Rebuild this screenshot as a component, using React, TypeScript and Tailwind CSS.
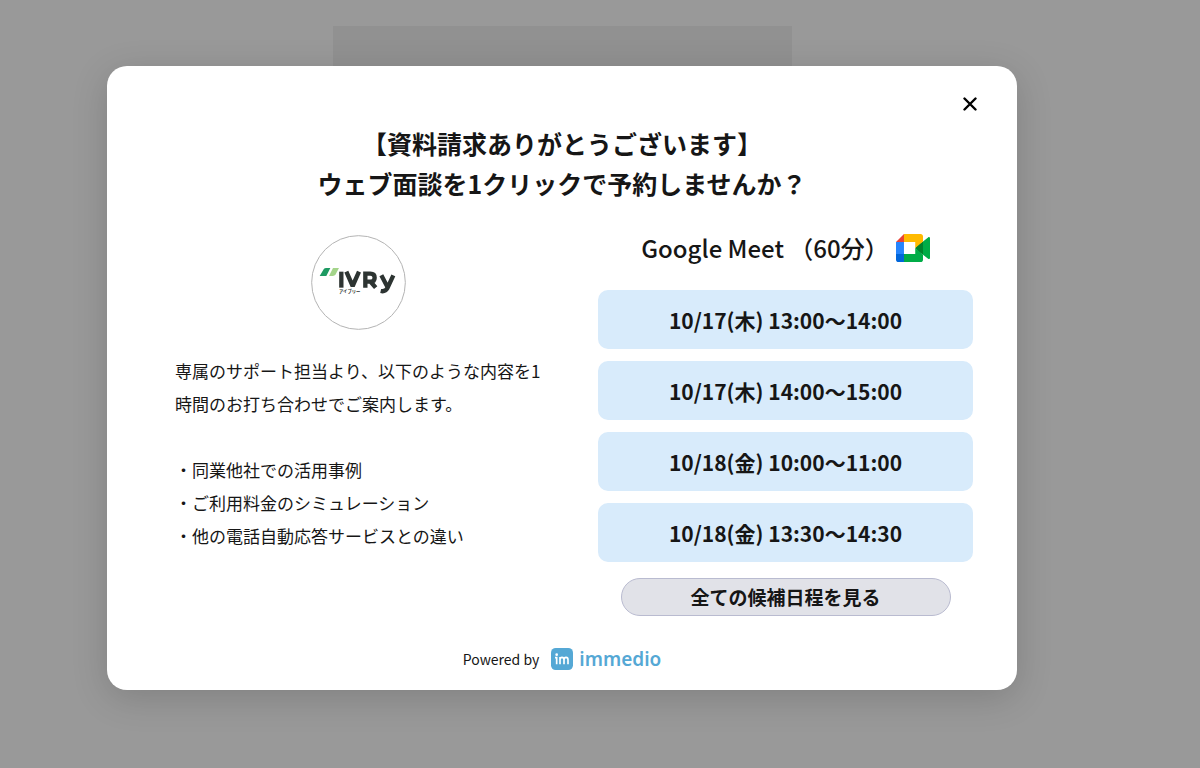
const SLOTS = [
  '10/17(木) 13:00〜14:00',
  '10/17(木) 14:00〜15:00',
  '10/18(金) 10:00〜11:00',
  '10/18(金) 13:30〜14:30',
];

const TOPICS = [
  '・同業他社での活用事例',
  '・ご利用料金のシミュレーション',
  '・他の電話自動応答サービスとの違い',
];

function CompanyLogo() {
  return (
    <svg viewBox="0 0 285 285" className="size-[95px]" role="img" aria-label="IVRy">
      <circle cx="142.5" cy="142.5" r="140.5" fill="#fff" stroke="#b4b4b4" strokeWidth="3" />
      <path d="M46 99 H58 L46 123 H26 L38 103 Q40 99 46 99 Z" fill="#1d9a62" />
      <path d="M66 99 H84 L74 118 Q71 123 65 123 H54 Z" fill="#a4d48a" />
      <g fill="none" stroke="#2d3432" strokeWidth="13">
        <path d="M91 110 V158" />
        <path d="M106 110 L125 153 L144 110" strokeLinejoin="bevel" />
        <path d="M163 158 V116 H178 Q191 116 191 128 Q191 140 178 140 H163 M177 138 L194 158" />
        <path d="M211 121 L229 155 M247 121 L229 160 Q223 171 209 168" />
      </g>
      <text x="84" y="175" fontSize="13" fontWeight="700" fill="#2d3432" fontFamily="Noto Sans CJK JP, sans-serif">
        アイブリー
      </text>
    </svg>
  );
}

function MeetIcon() {
  return (
    <svg viewBox="0 0 87.5 72" className="h-7 w-[34px]" aria-hidden="true">
      <path fill="#00832d" d="M49.5 36l8.53 9.75 11.47 7.33 2-17.02-2-16.64-11.69 6.44z" />
      <path fill="#0066da" d="M0 51.5V66c0 3.315 2.685 6 6 6h14.5l3-10.96-3-9.54-9.95-3z" />
      <path fill="#e94235" d="M20.5 0L0 20.5l10.55 3 9.95-3 2.95-9.41z" />
      <path fill="#2684fc" d="M20.5 20.5H0v31h20.5z" />
      <path
        fill="#00ac47"
        d="M82.6 8.68L69.5 19.42v33.66l13.16 10.79c1.97 1.54 4.85.135 4.85-2.37V11c0-2.535-2.945-3.925-4.91-2.32zM49.5 36v15.5h-29V72h43c3.315 0 6-2.685 6-6V53.08z"
      />
      <path fill="#ffba00" d="M63.5 0h-43v20.5h29V36l20-16.57V6c0-3.315-2.685-6-6-6z" />
    </svg>
  );
}

function ImmedioMark() {
  return (
    <svg viewBox="0 0 66 66" className="size-[22px]" aria-hidden="true">
      <rect width="66" height="66" rx="14" fill="#55a8d5" />
      <circle cx="17" cy="20" r="4" fill="#fff" />
      <path
        d="M12 29 H17 V49 M27 49 V27 M27 35 Q27 28 33 28 Q39 28 39 35 V49 M39 35 Q39 28 45 28 Q51 28 51 35 V49"
        fill="none"
        stroke="#fff"
        strokeWidth="5"
      />
    </svg>
  );
}

export default function App() {
  return (
    <div className="relative isolate flex min-h-screen items-start justify-center bg-[#999999] pt-[66px] pr-[76px] pb-10 font-['Noto_Sans_CJK_JP',sans-serif] text-[#161616]">
      <div className="absolute inset-x-0 top-[26px] -z-10 flex justify-center pr-[76px]">
        <div className="h-20 w-[459px] bg-[#919191]" />
      </div>

      <main
        role="dialog"
        aria-labelledby="dialog-title"
        className="w-full max-w-[910px] rounded-[20px] bg-white pt-[27px] pr-11 pb-4 pl-[68px] shadow-[0_8px_36px_rgba(0,0,0,0.16)]"
      >
        <div className="-mr-2 flex justify-end">
          <button type="button" aria-label="閉じる" className="flex size-[22px] items-center justify-center">
            <svg viewBox="0 0 14 14" className="size-3.5" aria-hidden="true">
              <path d="M1.5 1.5 L12.5 12.5 M12.5 1.5 L1.5 12.5" stroke="#000" strokeWidth="2.4" strokeLinecap="round" />
            </svg>
          </button>
        </div>

        <h1 id="dialog-title" className="mt-2 mr-6 text-center text-[25px] leading-10 font-bold">
          【資料請求ありがとうございます】
          <br />
          ウェブ面談を1クリックで予約しませんか？
        </h1>

        <div className="mt-6 flex justify-between">
          <section className="flex w-[367px] flex-col items-center pt-2">
            <CompanyLogo />
            <div className="mt-6 w-full text-[17px] leading-[33px]">
              <p>専属のサポート担当より、以下のような内容を1時間のお打ち合わせでご案内します。</p>
              <ul className="mt-[33px]">
                {TOPICS.map((topic) => (
                  <li key={topic}>{topic}</li>
                ))}
              </ul>
            </div>
          </section>

          <section className="flex w-[375px] flex-col items-center pt-px">
            <h2 className="flex h-10 items-center gap-[7px] text-2xl font-medium">
              Google Meet （60分）
              <MeetIcon />
            </h2>
            <ul className="mt-[22px] flex w-full flex-col gap-3">
              {SLOTS.map((slot) => (
                <li key={slot}>
                  <button type="button" className="h-[59px] w-full rounded-[10px] bg-[#d8ebfb] pt-[3px] text-[21px] font-bold">
                    {slot}
                  </button>
                </li>
              ))}
            </ul>
            <button
              type="button"
              className="mt-4 h-[38px] w-[330px] rounded-full border border-[#b9bbd0] bg-[#e1e2e8] text-[19px] font-bold"
            >
              全ての候補日程を見る
            </button>
          </section>
        </div>

        <footer className="mt-7 mr-6 flex h-[30px] items-center justify-center">
          <span className="text-sm">Powered by</span>
          <a href="#immedio" className="ml-3 flex items-center gap-1.5 text-[#55a8d5]">
            <ImmedioMark />
            <span className="font-['Noto_Sans',sans-serif] text-[19px] leading-6 font-semibold">immedio</span>
          </a>
        </footer>
      </main>
    </div>
  );
}
